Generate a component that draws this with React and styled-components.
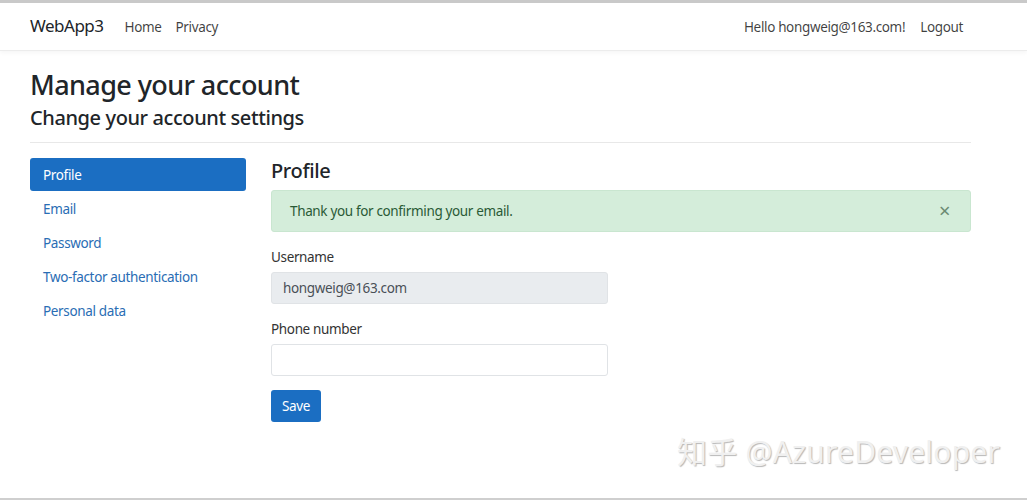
import React from "react";
import styled, { createGlobalStyle } from "styled-components";

const blue = "#1b6ec2";
const textColor = "#212529";

const GlobalStyle = createGlobalStyle`
  body {
    margin: 0;
    font-family: "Noto Sans", "Open Sans", sans-serif;
    letter-spacing: -0.35px;
    color: ${textColor};
    background: #fff;
  }
`;

const Page = styled.div`
  position: relative;
  height: 500px;
  box-sizing: border-box;
  border-top: 3px solid #c9c9c9;
  border-bottom: 2px solid #cfcfcf;
  overflow: hidden;
`;

const Navbar = styled.nav`
  height: 47px;
  display: flex;
  align-items: center;
  padding: 0 64px 0 30px;
  border-bottom: 1px solid #ececec;
  box-shadow: 0 2px 4px rgba(0, 0, 0, 0.04);
`;

const Brand = styled.div`
  font-size: 17px;
  letter-spacing: -0.5px;
  margin-right: 21px;
  padding-bottom: 2px;
`;

const NavGroup = styled.div`
  display: flex;
  align-items: center;
  gap: ${(p) => p.$gap};
  margin-left: ${(p) => (p.$right ? "auto" : "0")};
`;

const NavLink = styled.a`
  font-size: 13.5px;
  color: rgba(0, 0, 0, 0.75);
  text-decoration: none;
`;

const Main = styled.main`
  padding: 18px 56px 0 30px;
`;

const Title = styled.h1`
  margin: 0;
  font-size: 27px;
  font-weight: 500;
  letter-spacing: -0.6px;
  line-height: 1.2;
`;

const Subtitle = styled.h2`
  margin: 5px 0 0;
  font-size: 20px;
  font-weight: 500;
  letter-spacing: -0.4px;
  line-height: 1.2;
`;

const Rule = styled.hr`
  margin: 12px 0 14px;
  border: 0;
  border-top: 1px solid #e8e8e8;
`;

const Row = styled.div`
  display: flex;
  gap: 25px;
`;

const SideNav = styled.ul`
  list-style: none;
  margin: 1px 0 0;
  padding: 0;
  width: 216px;
  flex-shrink: 0;
  display: flex;
  flex-direction: column;
  gap: 1px;
`;

const SideItem = styled.li`
  height: 33px;
  display: flex;
  align-items: center;
  padding: 0 13px;
  border-radius: 3px;
  font-size: 13.5px;
  background: ${(p) => (p.$active ? blue : "transparent")};
  color: ${(p) => (p.$active ? "#fff" : "#2a6db4")};
`;

const Content = styled.div`
  flex: 1;
`;

const SectionTitle = styled.h3`
  margin: 0 0 5px;
  font-size: 20px;
  font-weight: 500;
  line-height: 28px;
`;

const Alert = styled.div`
  height: 42px;
  display: flex;
  align-items: center;
  justify-content: space-between;
  padding: 0 20px 0 18px;
  background: #d4edda;
  border: 1px solid #c9e6d0;
  border-radius: 3px;
  box-sizing: border-box;
  color: #2a5a36;
  font-size: 13.5px;
`;

const Close = styled.span`
  font-size: 20px;
  color: #6b8a72;
  line-height: 1;
`;

const Form = styled.form`
  width: 337px;
  margin-top: 16px;
`;

const Label = styled.label`
  display: block;
  font-size: 13.5px;
  color: #333;
  margin-bottom: 6px;
`;

const Input = styled.div`
  height: 32px;
  box-sizing: border-box;
  border: 1px solid #e0e3e6;
  border-radius: 3px;
  background: ${(p) => (p.$disabled ? "#e9ecef" : "#fff")};
  display: flex;
  align-items: center;
  padding: 0 11px;
  font-size: 13.5px;
  color: #495057;
  margin-bottom: ${(p) => p.$mb || "16px"};
`;

const Button = styled.button`
  height: 32px;
  padding: 0 11px;
  border: 0;
  border-radius: 3px;
  background: ${blue};
  color: #fff;
  font-family: inherit;
  letter-spacing: inherit;
  font-size: 13.5px;
`;

const Watermark = styled.div`
  position: absolute;
  right: 27px;
  bottom: 26px;
  font-family: "Noto Sans", "Noto Sans CJK SC", sans-serif;
  font-size: 30px;
  letter-spacing: 0.2px;
  color: #f0f0f0;
  text-shadow: 1px 1px 1px #b8b8b8;
`;

export default function App() {
  const items = [
    "Profile",
    "Email",
    "Password",
    "Two-factor authentication",
    "Personal data",
  ];
  return (
    <>
      <GlobalStyle />
      <Page>
        <Navbar>
          <Brand>WebApp3</Brand>
          <NavGroup $gap="14px">
            <NavLink>Home</NavLink>
            <NavLink>Privacy</NavLink>
          </NavGroup>
          <NavGroup $gap="15px" $right>
            <NavLink>Hello hongweig@163.com!</NavLink>
            <NavLink>Logout</NavLink>
          </NavGroup>
        </Navbar>
        <Main>
          <Title>Manage your account</Title>
          <Subtitle>Change your account settings</Subtitle>
          <Rule />
          <Row>
            <SideNav>
              {items.map((it, i) => (
                <SideItem key={it} $active={i === 0}>
                  {it}
                </SideItem>
              ))}
            </SideNav>
            <Content>
              <SectionTitle>Profile</SectionTitle>
              <Alert>
                <span>Thank you for confirming your email.</span>
                <Close>×</Close>
              </Alert>
              <Form>
                <Label>Username</Label>
                <Input $disabled>hongweig@163.com</Input>
                <Label>Phone number</Label>
                <Input $mb="14px" />
                <Button type="button">Save</Button>
              </Form>
            </Content>
          </Row>
        </Main>
        <Watermark>知乎 @AzureDeveloper</Watermark>
      </Page>
    </>
  );
}
